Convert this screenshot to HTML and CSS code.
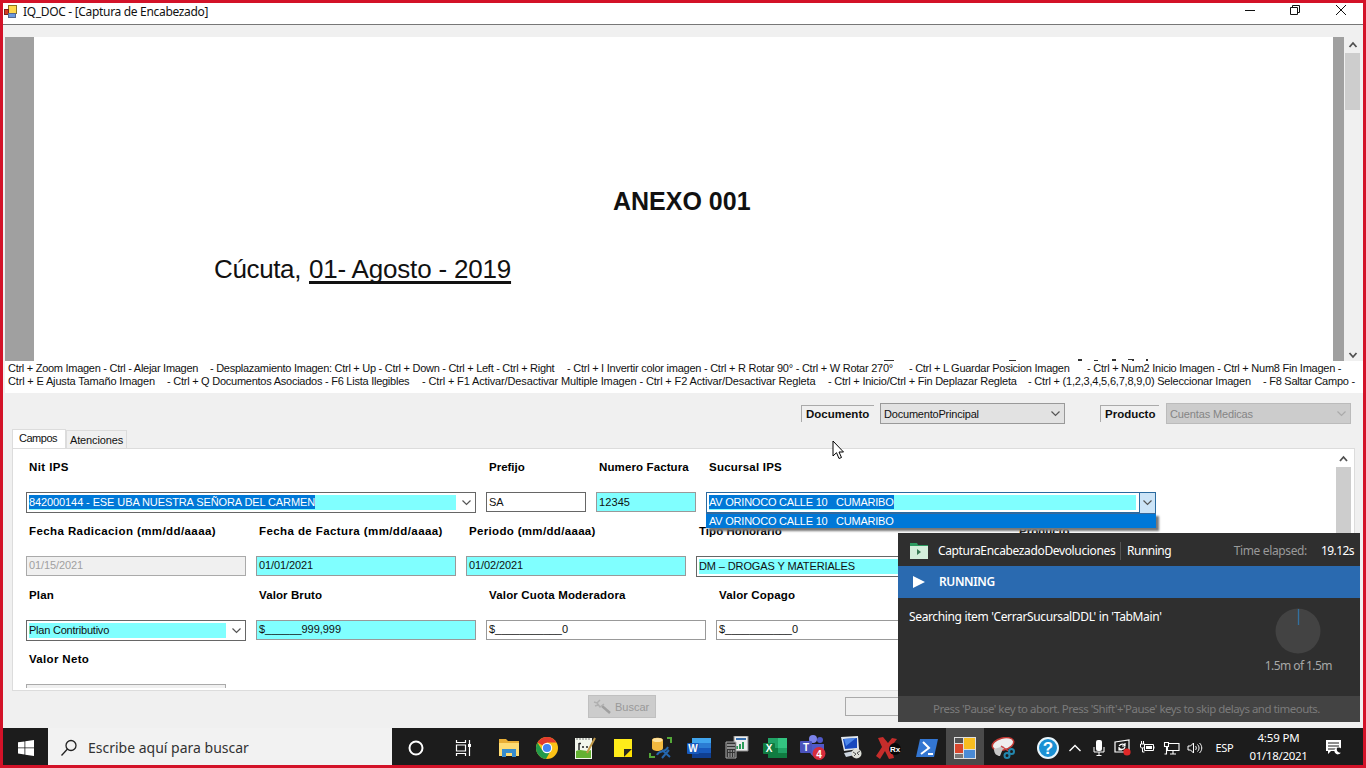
FILE: index.html
```html
<!DOCTYPE html>
<html lang="es">
<head>
<meta charset="utf-8">
<title>IQ_DOC</title>
<link rel="stylesheet" href="styles.css">
</head>
<body>
<div class="screen">
  <header class="titlebar">
    <svg class="app-icon" width="13" height="14" viewBox="0 0 13 14"><rect x="4.500" y=".5" width="8" height="8" fill="#ffd84c" stroke="#8b7320"/><rect x=".5" y="4.500" width="4" height="5" fill="#d43a25" stroke="#7a241b"/><rect x="4.500" y="8.500" width="7" height="4" fill="#6c98df" stroke="#55698f"/></svg>
    <span class="title">IQ_DOC - [Captura de Encabezado]</span>
    <svg class="win-buttons" width="106" height="14" viewBox="0 0 106 14" fill="none" stroke="#111"><path d="M1 7.500h10M46.500 4.500h7v7h-7zM48.500 4.500v-2h7v7h-2M92 2l10 10M102 2l-10 10"/></svg>
  </header>

  <section class="viewer">
    <div class="gutter gutter-left"></div>
    <div class="page">
      <h1 class="doc-title">ANEXO 001</h1>
      <p class="doc-date"><span class="city">Cúcuta,</span><u>01- Agosto - 2019</u></p>
      <svg class="next-line" width="280" height="2" viewBox="0 0 280 2" fill="#333"><path d="M2 1h10v1H2zM127 1h7v1h-7zM196 0h4v2h-4zM212 1h4v1h-4zM230 0h4v2h-4zM246 0h6v1h-6zM250 1h2v1h-2zM264 0h2v2h-2z"/></svg>
    </div>
    <div class="gutter gutter-right"></div>
    <div class="scroll">
      <svg width="15" height="16" viewBox="0 0 15 16" fill="none" stroke="#505050" stroke-width="1.800"><path d="M4.500 10l3.500-4 3.500 4"/></svg>
      <div class="thumb"></div>
      <svg class="scroll-down" width="15" height="12" viewBox="0 0 15 12" fill="none" stroke="#505050" stroke-width="1.800"><path d="M4.500 4l3.500 4 3.500-4"/></svg>
    </div>
  </section>

  <section class="shortcuts">
    <div class="keys keys-a">
      <span class="n28">Ctrl + Zoom Imagen - Ctrl - Alejar Imagen</span><span class="n28">- Desplazamiento Imagen: Ctrl + Up - Ctrl + Down - Ctrl + Left - Ctrl + Right</span><span class="n25">- Ctrl + I Invertir color imagen - Ctrl + R Rotar 90° - Ctrl + W Rotar 270°</span><span class="n28">- Ctrl + L Guardar Posicion Imagen</span><span class="n25">- Ctrl + Num2 Inicio Imagen - Ctrl + Num8 Fin Imagen -</span>
    </div>
    <div class="keys keys-b">
      <span class="n17">Ctrl + E Ajusta Tamaño Imagen</span><span class="n25">- Ctrl + Q Documentos Asociados - F6 Lista Ilegibles</span><span class="n14">- Ctrl + F1 Activar/Desactivar Multiple Imagen - Ctrl + F2 Activar/Desactivar Regleta</span><span class="n22">- Ctrl + Inicio/Ctrl + Fin Deplazar Regleta</span><span class="n20">- Ctrl + (1,2,3,4,5,6,7,8,9,0) Seleccionar Imagen</span><span class="n25">- F8 Saltar Campo -</span>
    </div>
  </section>

  <main class="work">
    <div class="selectors">
      <span class="tag tag-doc"><b>Documento</b></span>
      <div class="picker"><span class="n20">DocumentoPrincipal</span><svg class="chev" width="9" height="6" viewBox="0 0 9 6"><path d="M.5.5l4 4 4-4"/></svg></div>
      <span class="tag tag-prod"><b>Producto</b></span>
      <div class="picker disabled"><span class="n14">Cuentas Medicas</span><svg class="chev" width="9" height="6" viewBox="0 0 9 6"><path d="M.5.5l4 4 4-4"/></svg></div>
    </div>
    <nav class="tabs"><div class="tab active"><span class="n49">Campos</span></div><div class="tab"><span class="n14">Atenciones</span></div></nav>
    <div class="panel">
      <div class="form">
        <div class="row row-1">
          <div class="field"><label class="p42">Nit IPS</label><div class="combo"><div class="value"><span class="sel n10">842000144 - ESE UBA NUESTRA SEÑORA DEL CARMEN</span></div><svg class="chev" width="9" height="6" viewBox="0 0 9 6"><path d="M.5.5l4 4 4-4"/></svg></div></div>
          <div class="field"><label>Prefijo</label><div class="box dark">SA</div></div>
          <div class="field"><label class="p12">Numero Factura</label><div class="box cyan"><span class="p10">12345</span></div></div>
          <div class="field"><label class="p20">Sucursal IPS</label><div class="combo open"><div class="value"><span class="sel n22">AV ORINOCO CALLE 10 &nbsp;&nbsp;CUMARIBO</span></div><div class="drop"><svg class="chev" width="9" height="6" viewBox="0 0 9 6"><path d="M.5.5l4 4 4-4"/></svg></div>
            <div class="options"><span class="n22">AV ORINOCO CALLE 10 &nbsp;&nbsp;CUMARIBO</span></div></div></div>
        </div>
        <div class="row row-2">
          <div class="field"><label class="p42">Fecha Radicacion (mm/dd/aaaa)</label><div class="box off"><span class="n10">01/15/2021</span></div></div>
          <div class="field"><label class="p42">Fecha de Factura (mm/dd/aaaa)</label><div class="box cyan"><span class="n10">01/01/2021</span></div></div>
          <div class="field"><label class="p34">Periodo (mm/dd/aaaa)</label><div class="box cyan"><span class="n10">01/02/2021</span></div></div>
          <div class="field"><label class="p05">Tipo Honorario</label><div class="combo"><div class="value"><span class="n12">DM – DROGAS Y MATERIALES</span></div></div></div>
          <div class="field"><label>Producto</label></div>
        </div>
        <div class="row row-3">
          <div class="field"><label class="p16">Plan</label><div class="combo"><div class="value"><span class="n22">Plan Contributivo</span></div><svg class="chev" width="9" height="6" viewBox="0 0 9 6"><path d="M.5.5l4 4 4-4"/></svg></div></div>
          <div class="field"><label class="p10">Valor Bruto</label><div class="box cyan"><span class="n04">$______999,999</span></div></div>
          <div class="field"><label class="p16">Valor Cuota Moderadora</label><div class="box"><span class="n04">$___________0</span></div></div>
          <div class="field"><label class="p16">Valor Copago</label><div class="box"><span class="n04">$___________0</span></div></div>
        </div>
        <div class="row row-4"><div class="field"><label class="p34">Valor Neto</label><div class="box off"></div></div></div>
      </div>
      <div class="panel-scroll"><svg width="15" height="18" viewBox="0 0 15 18" fill="none" stroke="#505050" stroke-width="1.800"><path d="M4 12l3.500-4 3.500 4"/></svg><div class="thumb"></div></div>
    </div>
    <footer class="actions">
      <div class="search-btn"><svg width="20" height="18" viewBox="0 0 20 18" fill="none" stroke="#a0a0a0"><path d="M9 8l8 7" stroke-width="2.500"/><path d="M1 4l3 1 3-3M4 5l3 4 4-3M2 8l3-1" stroke-width="1.500" stroke="#b0b0b0"/></svg><span>Buscar</span></div>
      <div class="progress"></div>
    </footer>
  </main>

  <footer class="taskbar">
    <div class="start"><svg width="16" height="16" viewBox="0 0 16 16" fill="#fff"><path d="M0 2.300l6.500-.9v6.100H0zM7.300 1.300L16 0v7.500H7.300zM0 8.300h6.500v6.200L0 13.600zM7.300 8.300H16V16l-8.700-1.300z"/></svg></div>
    <div class="search"><svg width="18" height="18" viewBox="0 0 18 18" fill="none" stroke="#222" stroke-width="1.300"><circle cx="11" cy="6.500" r="5"/><path d="M7.500 10L1.500 16.500"/></svg><span>Escribe aquí para buscar</span></div>
    <div class="cell cortana"><svg width="18" height="18" viewBox="0 0 18 18"><circle cx="9" cy="9" r="6.500" fill="none" stroke="#fff" stroke-width="2"/></svg></div>
    <div class="cell taskview"><svg width="18" height="16" viewBox="0 0 18 16" fill="none" stroke="#fff" stroke-width="1.200"><path d="M1.500 0v2.500h9V0M1.500 5h9v6h-9zM1.500 16v-2.500h9V16M14.500 0v16"/><path d="M13 4h3v3h-3z" fill="#fff" stroke="none"/></svg></div>

    <div class="cell"><svg width="22" height="20" viewBox="0 0 22 20"><path d="M1 1h7l2 2h11v15H1z" fill="#e9ae35"/><path d="M1 5h20v13H1z" fill="#ffdc73"/><path d="M4 19v-8h14v8h-4v-4H8v4z" fill="#378ccc"/></svg></div>
    <div class="cell"><svg width="22" height="22" viewBox="0 0 22 22"><circle cx="11" cy="11" r="11" fill="#fbc116"/><path d="M11 11L1.500 5.500A11 11 0 0 1 20.500 5.500H11z" fill="#e33b2e"/><path d="M1.500 5.500A11 11 0 0 0 10 22l5-9-4-2-5 2z" fill="#229a4b"/><circle cx="11" cy="11" r="5.200" fill="#fff"/><circle cx="11" cy="11" r="4.100" fill="#4285f4"/></svg></div>
    <div class="cell"><svg width="22" height="22" viewBox="0 0 22 22"><path d="M1 1h17v21H1z" fill="#f3f7ed"/><path d="M2 14c6-3 10 2 15-1v8H2z" fill="#63b132"/><path d="M3 1v2M6 1v2M9 1v2M12 1v2M15 1v2" stroke="#777"/><path d="M5 6v7M5 6.500h2M8 10h2M12 10h2" stroke="#222" fill="none" stroke-width="1.400"/><path d="M21 1l-7 13-1 2" stroke="#c29a4a" stroke-width="2"/></svg></div>
    <div class="cell"><svg width="18" height="18" viewBox="0 0 18 18"><path d="M0 0h18v10l-8 8H0z" fill="#ffec1a"/><path d="M10 18v-8h8z" fill="#282820"/><path d="M18 10v8h-8z" fill="#ffe100"/></svg></div>
    <div class="cell"><svg width="24" height="22" viewBox="0 0 24 22"><path d="M3 3c0-3 11-3 11 0v8c0 4-11 4-11 0z" fill="#f2b83f"/><ellipse cx="8.500" cy="3" rx="5" ry="2" fill="#ffe3a0"/><path d="M18 1h4v5M1 16v4h5" fill="none" stroke="#54a838" stroke-width="2"/><path d="M8 18c2-6 8-1 11-8M13 13l8 7M20 13l-7 8" fill="none" stroke="#2567ae" stroke-width="2"/></svg></div>
    <div class="cell"><svg width="24" height="20" viewBox="0 0 24 20"><path d="M5 0h19v5H5z" fill="#41a5ee"/><path d="M5 5h19v5H5z" fill="#2b7cd3"/><path d="M5 10h19v5H5z" fill="#185abd"/><path d="M5 15h19v5H5z" fill="#103f91"/><rect y="5" width="12" height="11" rx="1" fill="#185abd"/><text x="6" y="14" class="glyph">W</text></svg></div>
    <div class="cell"><svg width="24" height="23" viewBox="0 0 24 23"><path d="M9 0h14v15H9z" fill="#eee" stroke="#888"/><path d="M11 3h10" stroke="#3770b0" stroke-width="2"/><path d="M12 13v-3M15 13V8M18 13V6" stroke="#2c9c58" stroke-width="2"/><path d="M1 6h10v16H1z" fill="#333" stroke="#aaa"/><path d="M2 9h8M2 12h8" stroke="#eee"/><path d="M3 15h7M3 18h7M3 20h7" stroke="#ddd" stroke-dasharray="1.500 1"/></svg></div>
    <div class="cell"><svg width="24" height="20" viewBox="0 0 24 20"><path d="M5 0h10v10H5z" fill="#21a366"/><path d="M15 0h9v10h-9z" fill="#33c481"/><path d="M5 10h19v10H5z" fill="#107c41"/><path d="M15 10h9v5h-9z" fill="#21a366"/><rect y="5" width="12" height="11" rx="1" fill="#107c41"/><text x="6" y="14" class="glyph">X</text></svg></div>
    <div class="cell"><svg width="26" height="26" viewBox="0 0 26 26"><circle cx="20" cy="5" r="3" fill="#5059c9"/><circle cx="13" cy="4" r="4" fill="#7b83eb"/><path d="M7 9h17v8c0 5-12 8-14 0z" fill="#5059c9"/><rect y="6" width="12" height="12" rx="1" fill="#4b53bc"/><text x="6" y="16" class="glyph">T</text><circle cx="19" cy="18.500" r="6.500" fill="#d62c3d"/><text x="19" y="22.500" class="glyph">4</text></svg></div>
    <div class="cell"><svg width="22" height="23" viewBox="0 0 22 23"><path d="M1 1l17-1 1 13-15 2z" fill="#e1e7ed"/><path d="M3 3l14-1v10L5 13z" fill="#1648be"/><path d="M4 3l12-1-10 8z" fill="#4c87e9"/><path d="M4 17l10-2 5 3-13 3z" fill="#ccd5df"/><circle cx="16.500" cy="17.500" r="5" fill="#dddfd8"/><path d="M13 16l3 2-2 2M20 15l-3 2 2 2" fill="none" stroke="#555"/></svg></div>
    <div class="cell"><svg width="26" height="22" viewBox="0 0 26 22"><path d="M2 1l5-1 5 6 4-5 5 1-6 8 3 11-5 1-4-8-5 8-4-3 6-9z" fill="#c52d2b"/><circle cx="19" cy="12" r="6" fill="#080808"/><text x="19" y="15" class="glyph g-rx">Rx</text></svg></div>
    <div class="cell"><svg width="24" height="20" viewBox="0 0 24 20"><path d="M5 1h18l-4 18H1z" fill="#3376d2"/><path d="M8 4l6 6-8 6M13 16h5" fill="none" stroke="#fff" stroke-width="2"/></svg></div>
    <div class="cell current"><svg width="22" height="22" viewBox="0 0 22 22"><path d="M0 0h22v22H0z" fill="#dedede"/><path d="M1 1h8v5H1z" fill="#555"/><path d="M10 1h11v11H10z" fill="#f8bd21"/><path d="M1 7h8v9H1z" fill="#d8472d"/><path d="M10 13h11v8H10z" fill="#4a8bd6"/><path d="M1 17h8v4H1z" fill="#777"/></svg></div>
    <div class="cell"><svg width="24" height="22" viewBox="0 0 24 22"><ellipse cx="12" cy="7" rx="11" ry="6" fill="#eee" stroke="#c33a35" stroke-width="1.500" transform="rotate(-15 12 7)"/><path d="M3 12l10-3-4 10c-3 0-6-2-6-7z" fill="#c7c7c7"/><path d="M10 9l9 6" stroke="#c44" stroke-width="1.500"/><g fill="none" stroke="#2286ad" stroke-width="2"><circle cx="16" cy="18.500" r="2.500"/><circle cx="20.500" cy="14.500" r="2.500"/></g></svg></div>

    <div class="tray help"><svg width="22" height="22" viewBox="0 0 22 22"><circle cx="11" cy="11" r="10" fill="#1b91d4" stroke="#eaf6fc" stroke-width="2"/><text x="11" y="17" class="glyph g-help">?</text></svg></div>
    <div class="tray"><svg width="14" height="8" viewBox="0 0 14 8" fill="none" stroke="#fff" stroke-width="1.400"><path d="M1.500 7L7 1.500 12.500 7"/></svg></div>
    <div class="tray"><svg width="12" height="16" viewBox="0 0 12 16"><rect x="3" width="6" height="11" rx="2" fill="#fff"/><path d="M1 7v5h10V7M6 12v4M3.500 15.500h5" fill="none" stroke="#fff"/></svg></div>
    <div class="tray"><svg width="18" height="17" viewBox="0 0 18 17"><path d="M1 3l14-2v12H1zM5 7c2-3 6-2 6 0M11 4v3H8M5 8v3h3M5 9c2 2 5 2 6-1" fill="none" stroke="#fff" stroke-width="1.200"/><circle cx="13" cy="13" r="3.600" fill="#e02828"/></svg></div>
    <div class="tray"><svg width="16" height="13" viewBox="0 0 16 13" fill="none" stroke="#fff"><path d="M5.500 3.500h9v6h-9zM15 5.500v2M1.500 3h4v3l-1 1h-2l-1-1zM2.500 3V0M4.500 3V0M3.500 7v4h2"/><path d="M7 5h6v3H7z" fill="#fff" stroke="none"/></svg></div>
    <div class="tray"><svg width="17" height="14" viewBox="0 0 17 14" fill="none" stroke="#fff" stroke-width="1.100"><path d="M6 2.500h10v7H4.500V6M10 9.500V13M7 13h6M1.500 1.500h4v4h-4zM3.500 5.500V13h-2"/></svg></div>
    <div class="tray"><svg width="16" height="12" viewBox="0 0 16 12" fill="none" stroke="#fff"><path d="M1 4h2.500L6.500 1v10l-3-3H1zM8.500 4c1 1 1 3 0 4M10.500 2.500c2 2 2 5 0 7M12.500 1c3 3 3 7 0 10"/></svg></div>
    <div class="lang"><span>ESP</span></div>
    <div class="clock"><span class="n14">4:59 PM</span><span class="date">01/18/2021</span></div>
    <div class="notif"><svg width="18" height="17" viewBox="0 0 18 17"><path d="M1 1h15v11H6l-3 3v-3H1z" fill="#fff"/><path d="M3 4h11M3 7h11M3 10h8" stroke="#1c1c1c"/><circle cx="13.500" cy="12" r="3.500" fill="#1c1c1c"/><path d="M12 8.500a3.500 3.500 0 1 0 4 5c-3 1-5-2-4-5z" fill="#fff"/></svg></div>
  </footer>

  <aside class="runner">
    <div class="runner-head">
      <svg width="18" height="17" viewBox="0 0 18 17"><path d="M0 1h7l1 2h10v14H0z" fill="#2d9a60"/><path d="M0 4h18v13H0z" fill="#d3eedb"/><path d="M7 7v6l4-3z" fill="#397a55"/></svg>
      <span class="proc">CapturaEncabezadoDevoluciones</span>
      <span class="state">Running</span>
      <span class="elapsed">Time elapsed:</span>
      <span class="secs">19.12s</span>
    </div>
    <div class="runner-bar"><svg width="12" height="12" viewBox="0 0 12 12"><path d="M0 0l12 6-12 6z" fill="#fff"/></svg><span>RUNNING</span></div>
    <div class="runner-body"><span class="msg">Searching item 'CerrarSucursalDDL' in 'TabMain'</span>
      <div class="timer"><svg width="46" height="46" viewBox="0 0 46 46"><circle cx="23" cy="23" r="22.500" fill="#434343"/><path d="M23.500 1v16" stroke="#33709f" stroke-width="1.300"/></svg><span>1.5m of 1.5m</span></div></div>
    <div class="runner-foot"><span>Press 'Pause' key to abort. Press 'Shift'+'Pause' keys to skip delays and timeouts.</span></div>
  </aside>
  <svg class="cursor" width="13" height="20" viewBox="0 0 13 20"><path d="M1 1v15l3.500-3.300L7 18.500l2.500-1L7 12h4.500z" fill="#fff" stroke="#000"/></svg>
</div>
</body>
</html>
```
FILE: styles.css
```css
*{box-sizing:border-box}
body{margin:0;width:1366px;height:768px;overflow:hidden;font:11px/14px "Liberation Sans",Arial,sans-serif;color:#111}
svg{display:block;flex:none}

/* tracking steps, in hundredths of a pixel */
.n49{letter-spacing:-.49px}.n28{letter-spacing:-.275px}.n25{letter-spacing:-.25px}.n22{letter-spacing:-.22px}
.n20{letter-spacing:-.2px}.n17{letter-spacing:-.165px}.n14{letter-spacing:-.14px}.n12{letter-spacing:-.12px}
.n10{letter-spacing:-.1px}.n04{letter-spacing:-.04px}
.p05{letter-spacing:.05px}.p10{letter-spacing:.1px}.p12{letter-spacing:.12px}.p16{letter-spacing:.17px}
.p20{letter-spacing:.22px}.p34{letter-spacing:.33px}.p42{letter-spacing:.41px}

.screen{position:relative;display:flex;flex-direction:column;width:1366px;height:768px;border:3px solid #d31228;background:#f0f0f0;white-space:nowrap}
.titlebar{display:flex;height:22px;padding-left:1px;background:#fff;border-bottom:1px solid #777}
.app-icon{margin-top:2px}
.title{margin:1px auto 0 6px;font:12px/16px "Noto Sans","Open Sans",sans-serif;letter-spacing:-.32px}
.win-buttons{margin:0 13px 0 0}

.viewer{display:flex;height:324px;margin:12px 0 0 2px}
.gutter{background:#a0a0a0}
.gutter-left{width:29px}.gutter-right{width:11px}
.page{position:relative;width:1299px;background:#fff;overflow:hidden}
.doc-title{margin:150px 0 0 579px;font-size:25px;line-height:29px}
.doc-date{display:flex;gap:8px;margin:38px 0 0 180px;font-size:26px;line-height:30px}
.city{letter-spacing:-.37px}
.doc-date u{letter-spacing:-.19px;text-decoration-thickness:3px;text-underline-offset:3px;text-decoration-skip-ink:none}
.next-line{position:absolute;left:848px;bottom:0}
.scroll{display:flex;flex-direction:column;width:15px;margin-left:1px}
.thumb{background:#cdcdcd}
.scroll .thumb{height:57px}
.scroll-down{margin-top:auto}

.shortcuts{height:32px;margin-left:2px;padding:0 0 0 3px;background:#fff}
.keys{display:grid;height:13px;line-height:14px}
.keys-a{grid-template-columns:202px 357px 342px 178px 1fr}
.keys-b{grid-template-columns:159px 255px 406px 200px 235px 1fr}

.work{display:flex;flex-direction:column;height:335px;padding-left:9px}
.selectors{display:flex;height:36px;padding:10px 0 0 789px}
.tag{height:17px;margin-top:2px;border:1px solid #aaa;border-right:0;border-bottom:0;padding-left:4px;font-size:11.500px;line-height:16px}
.tag-doc{width:73px}.tag-prod{width:59px;margin-left:35px}
.picker{display:flex;align-items:center;justify-content:space-between;width:185px;height:21px;margin-left:6px;padding:0 4px 0 3px;border:1px solid #999;background:#e2e2e2}
.tag-prod + .picker{margin-left:7px}
.chev{fill:none;stroke:#555;stroke-width:1.2}
.picker.disabled{background:#ccc;color:#858585;border-color:#bbb}
.disabled .chev{stroke:#aaa}
.tabs{display:flex;align-items:flex-end;height:19px}
.tab{height:18px;width:61px;padding:2px 0 0 3px;background:#f0f0f0;border:1px solid #dcdcdc;border-bottom:0}
.tab.active{width:54px;height:19px;padding:1px 0 0 6px;background:#fff}
.panel{display:flex;width:1343px;height:243px;border:1px solid #dcdcdc;background:#fff}
.form{width:1323px;height:239px;padding:11px 0 0 13px;overflow:hidden}
.row{display:grid;height:64px;column-gap:10px}
.row-1{grid-template-columns:450px 100px 100px 450px}
.row-2{grid-template-columns:220px 200px 220px 310px 100px}
.row-3{grid-template-columns:220px 220px 220px 220px}
.row-4{grid-template-columns:200px}
label{display:block;height:32px;padding-left:3px;font-weight:bold;font-size:11.500px;line-height:15px;color:#000}
.box{height:20px;padding:1px 0 0 2px;border:1px solid #999;background:#fff}
.row-1 .box{padding-top:2px}
.box.dark{border-color:#666}
.cyan,.value{background:#80ffff}
.off{background:#f0f0f0;color:#a0a0a0;border-color:#aaa}
.combo{position:relative;display:flex;align-items:center;height:21px;padding:2px 4px 2px 2px;border:1px solid #666;background:#fff}
.value{flex:1;height:15px;margin-right:6px;line-height:15px}
.sel{display:inline-block;height:14px;line-height:14px;background:#0078d7;color:#fff}
.open{border-color:#2a6a9f;padding-right:0}
.open .value{margin-right:3px}
.drop{display:grid;place-items:center;width:16px;height:20px;border-left:1px solid #2a6a9f;background:#cce4f7}
.options{position:absolute;left:-1px;top:20px;width:450px;height:15px;padding:0 0 0 3px;line-height:14px;background:#0078d7;color:#fff;border-top:1px solid #38699b;box-shadow:3px 3px 2px #777}
.panel-scroll{width:15px}
.panel-scroll .thumb{height:223px}
.actions{display:flex;padding:4px 0 0 576px}
.search-btn{display:flex;align-items:center;gap:2px;width:68px;height:23px;padding-left:4px;background:#ccc;border:1px solid #c0c0c0;color:#999}
.progress{width:120px;height:19px;margin:2px 0 0 189px;border:1px solid #aaa}

.taskbar{display:flex;height:37px;background:#1c1c1c;color:#fff;font-family:"Noto Sans","Open Sans",sans-serif}
.taskbar>div{display:flex;align-items:center;justify-content:center;flex:none;padding-top:2px}
.taskbar .start{width:45px}
.taskbar .search{width:344px;justify-content:flex-start;gap:10px;padding-left:12px;background:#f2f2f2;color:#333;font-size:14px}
.cell{width:38px}
.taskbar .cortana{width:48px}.taskbar .taskview{width:50px;padding-right:2px}
.current{background:#4a4a4a}
.glyph{font:bold 10px "Liberation Sans",sans-serif;fill:#fff;text-anchor:middle}
.g-rx{font-size:8px}.g-help{font-size:17px}
.tray{width:24px}
.tray.help{width:41px;padding-left:11px}
.lang{width:35px;font-size:11px;letter-spacing:-.27px}
.taskbar .clock{flex-direction:column;width:73px;padding:0;font-size:11.500px;line-height:18px}
.date{letter-spacing:-.32px}
.notif{width:37px}

.runner{position:absolute;left:895px;top:530px;width:462px;height:189px;display:flex;flex-direction:column;background:#2f2f2f;color:#fff;font:12px/16px "Noto Sans","Open Sans",sans-serif;letter-spacing:-.36px}
.runner-head{display:flex;align-items:center;height:33px;padding:2px 6px 0 12px}
.proc{width:182px;margin-left:10px}
.state{height:18px;border-left:1px solid #555;padding-left:6px;line-height:18px;letter-spacing:-.5px}
.elapsed{margin-left:auto;color:#9a9a9a}
.secs{margin-left:14px;letter-spacing:-.57px}
.runner-bar{display:flex;align-items:center;gap:14px;height:32px;padding-left:15px;background:#2a6ab0;font-weight:600}
.runner-body{display:flex;justify-content:space-between;flex:1;padding:10px 28px 0 11px}
.msg{margin-top:1px}
.timer{display:flex;flex-direction:column;align-items:center;gap:4px;color:#a8a8a8;letter-spacing:-.56px}
.runner-foot{display:grid;place-items:center;height:26px;padding-right:5px;background:#434343;color:#7b7b7b;font-size:11.500px;letter-spacing:-.52px}
.cursor{position:absolute;left:829px;top:437px}
```
